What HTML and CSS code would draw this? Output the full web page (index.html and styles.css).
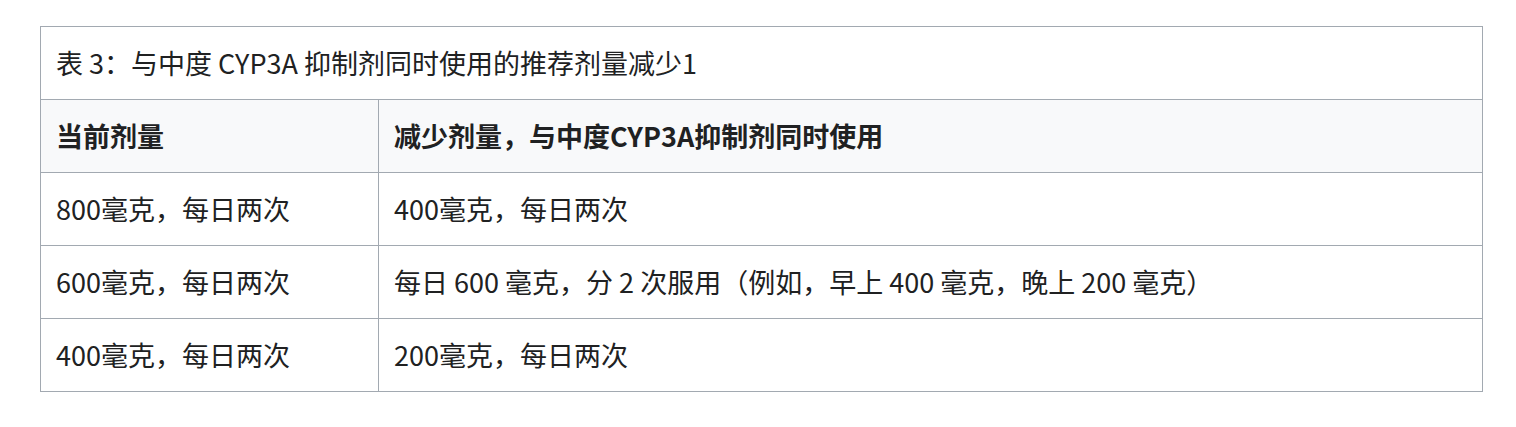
FILE: index.html
```html
<!DOCTYPE html>
<html lang="zh-CN">
<head>
<meta charset="utf-8">
<link rel="stylesheet" href="styles.css">
</head>
<body>
<div class="page">
<table class="dose-table">
<caption class="dose-caption">表 3：与中度 CYP3A 抑制剂同时使用的推荐剂量减少1</caption>
<thead>
<tr><th class="col-a">当前剂量</th><th>减少剂量，与中度CYP3A抑制剂同时使用</th></tr>
</thead>
<tbody>
<tr><td>800毫克，每日两次</td><td>400毫克，每日两次</td></tr>
<tr><td>600毫克，每日两次</td><td>每日 600 毫克，分 2 次服用（例如，早上 400 毫克，晚上 200 毫克）</td></tr>
<tr><td>400毫克，每日两次</td><td>200毫克，每日两次</td></tr>
</tbody>
</table>
</div>
</body>
</html>
```
FILE: styles.css
```css
html, body {
  margin: 0;
  background: #ffffff;
}
.page {
  padding: 26px 0 0 40px;
  font-family: "Noto Sans CJK SC", "Noto Sans", sans-serif;
  color: #202122;
}
.dose-table {
  width: 1443px;
  border-collapse: collapse;
  font-size: 27px;
  table-layout: fixed;
}
.dose-caption {
  caption-side: top;
  text-align: left;
  border: 1px solid #a2a9b1;
  border-bottom: none;
  height: 73px;
  box-sizing: border-box;
  padding: 0 15px;
  line-height: 72px;
  font-weight: normal;
}
.dose-table th,
.dose-table td {
  border: 1px solid #a2a9b1;
  height: 72px;
  padding: 0 15px;
  text-align: left;
  vertical-align: middle;
  line-height: 34px;
}
.dose-table th {
  background: #f8f9fa;
  font-weight: bold;
}
.col-a {
  width: 307px;
}
```
